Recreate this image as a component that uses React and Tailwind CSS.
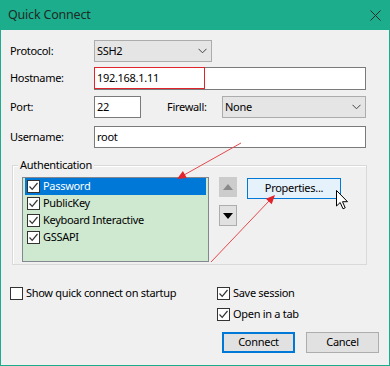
import React from "react"

function Check({ checked = true }) {
  return (
    <span className="w-[13px] h-[13px] shrink-0 border border-[#333] bg-white flex items-center justify-center">
      {checked && (
        <svg width="11" height="11" viewBox="0 0 11 11">
          <path d="M1.5 5.5 L4.2 8.3 L9.5 2" fill="none" stroke="#333" strokeWidth="1.2" />
        </svg>
      )}
    </span>
  )
}

function Chevron() {
  return (
    <svg width="9" height="6" viewBox="0 0 9 6">
      <path d="M0.5 0.8 L4.5 4.8 L8.5 0.8" fill="none" stroke="#444" strokeWidth="1" />
    </svg>
  )
}

function Select({ value, width }) {
  return (
    <div className={`${width} h-full bg-[#e5e5e5] border border-[#acacac] flex items-center justify-between pl-[2px] pr-[4px]`}>
      <span>{value}</span>
      <Chevron />
    </div>
  )
}

function Input({ value, width }) {
  return (
    <div className={`${width} h-full bg-white border border-[#7a7a7a] flex items-center pl-[2px]`}>
      <span>{value}</span>
    </div>
  )
}

const methods = ["Password", "PublicKey", "Keyboard Interactive", "GSSAPI"]

export default function App() {
  return (
    <div className="relative w-[390px] h-[366px] bg-[#f0f0f0] border-x border-b border-[#1cae8c] flex flex-col font-['Noto_Sans',sans-serif] text-[11px] tracking-[-0.3px] text-black overflow-hidden">
      {/* title bar */}
      <div className="h-[30px] shrink-0 bg-[#1cae8c] flex items-center justify-between pl-[7px] pr-[8px]">
        <span className="text-[12.5px] tracking-[-0.2px] text-[#1e2b27]">Quick Connect</span>
        <svg width="11" height="11" viewBox="0 0 11 11">
          <path d="M0.5 0.5 L10.5 10.5 M10.5 0.5 L0.5 10.5" stroke="#1e2b27" strokeWidth="1" />
        </svg>
      </div>

      <div className="flex flex-col px-[9px]">
        <div className="flex items-center h-[22px] mt-[10px]">
          <span className="w-[84px]">Protocol:</span>
          <Select value="SSH2" width="w-[118px]" />
        </div>

        <div className="flex items-center h-[23px] mt-[5px]">
          <span className="w-[84px]">Hostname:</span>
          <div className="relative h-full">
            <Input value="192.168.1.11" width="w-[272px]" />
            <div className="absolute left-0 top-0 w-[111px] h-[22px] border border-[#e0242c]" />
          </div>
        </div>

        <div className="flex items-center h-[22px] mt-[6px]">
          <span className="w-[84px]">Port:</span>
          <Input value="22" width="w-[47px]" />
          <span className="ml-[26px] w-[55px]">Firewall:</span>
          <Select value="None" width="w-[144px]" />
        </div>

        <div className="flex items-center h-[22px] mt-[8px]">
          <span className="w-[84px]">Username:</span>
          <Input value="root" width="w-[272px]" />
        </div>

        {/* Authentication group */}
        <div className="relative mt-[17px] ml-[2px] w-[355px] h-[100px] border border-[#d9d9d9] shadow-[inset_1px_1px_0_#fff] pl-[9px] pt-[11px] flex items-start">
          <span className="absolute -top-[9px] left-[5px] px-[2px] bg-[#f0f0f0]">Authentication</span>

          <div className="w-[187px] h-[85px] border border-[#828790] bg-[#cfe8d0] px-[2px]">
            {methods.map((m, i) => (
              <div
                key={m}
                className={`h-[17px] flex items-center gap-[3px] pl-[2px] ${i === 0 ? "bg-[#0078d7] text-white" : ""}`}
              >
                <Check />
                <span>{m}</span>
              </div>
            ))}
          </div>

          <div className="ml-[10px] flex flex-col">
            <div className="w-[18px] h-[20px] bg-[#cccccc] flex items-center justify-center">
              <svg width="10" height="6" viewBox="0 0 10 6"><path d="M0 6 L5 0 L10 6 Z" fill="#8a8a8a" /></svg>
            </div>
            <div className="mt-[8px] w-[18px] h-[21px] bg-[#e1e1e1] border border-[#adadad] flex items-center justify-center">
              <svg width="10" height="6" viewBox="0 0 10 6"><path d="M0 0 L10 0 L5 6 Z" fill="#000" /></svg>
            </div>
          </div>

          <div className="ml-[10px] mt-[1px] w-[94px] h-[21px] border border-[#0078d7] bg-[#e5f1fb] flex items-center justify-center">
            Properties...
          </div>
        </div>

        {/* bottom */}
        <div className="flex mt-[21px]">
          <div className="w-[207px]">
            <div className="h-[14px] flex items-center gap-[3px]">
              <Check checked={false} />
              <span>Show quick connect on startup</span>
            </div>
          </div>
          <div className="flex flex-col">
            <div className="h-[14px] flex items-center gap-[3px]">
              <Check />
              <span>Save session</span>
            </div>
            <div className="h-[14px] mt-[7px] flex items-center gap-[3px]">
              <Check />
              <span>Open in a tab</span>
            </div>
            <div className="flex mt-[11px] pl-[5px]">
              <div className="w-[73px] h-[21px] border-2 border-[#0078d7] bg-[#e1e1e1] flex items-center justify-center">
                Connect
              </div>
              <div className="ml-[11px] w-[73px] h-[21px] border border-[#adadad] bg-[#e1e1e1] flex items-center justify-center">
                Cancel
              </div>
            </div>
          </div>
        </div>
      </div>

      {/* annotation arrows + mouse pointer */}
      <svg className="absolute left-0 top-0 pointer-events-none" width="390" height="366" viewBox="0 0 390 366">
        <line x1="240" y1="143" x2="183" y2="175" stroke="#e5484d" strokeWidth="1" />
        <polygon points="176,179 185.8,178.1 181.9,171.1" fill="#e0242c" />
        <line x1="210" y1="262" x2="268" y2="201" stroke="#e5484d" strokeWidth="1" />
        <polygon points="274,195 270.7,204.3 264.9,198.7" fill="#e0242c" />
        <path
          d="M335.5 190.5 L335.5 206 L339.2 202.5 L342 208.8 L344.2 207.8 L341.5 201.7 L346.5 201.7 Z"
          fill="#fff"
          stroke="#000"
          strokeWidth="1"
          strokeLinejoin="round"
        />
      </svg>
    </div>
  )
}
